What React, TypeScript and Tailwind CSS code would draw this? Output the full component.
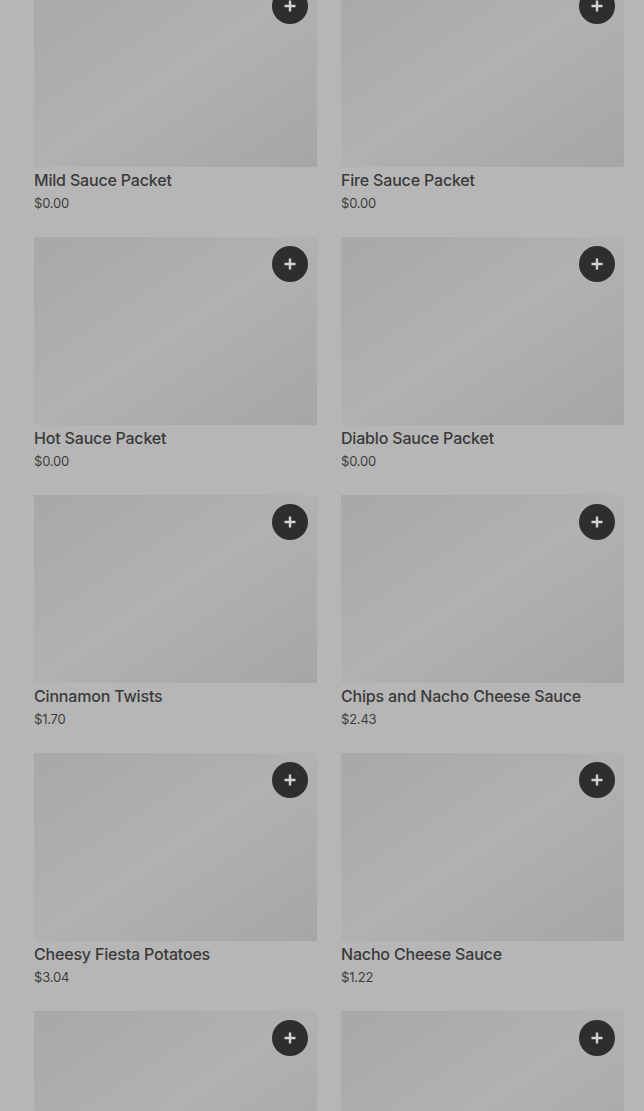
import React from 'react';

const items = [
  { name: 'Mild Sauce Packet', price: '$0.00' },
  { name: 'Fire Sauce Packet', price: '$0.00' },
  { name: 'Hot Sauce Packet', price: '$0.00' },
  { name: 'Diablo Sauce Packet', price: '$0.00' },
  { name: 'Cinnamon Twists', price: '$1.70' },
  { name: 'Chips and Nacho Cheese Sauce', price: '$2.43' },
  { name: 'Cheesy Fiesta Potatoes', price: '$3.04' },
  { name: 'Nacho Cheese Sauce', price: '$1.22' },
  { name: '', price: '' },
  { name: '', price: '' },
];

const PlusIcon = () => (
  <svg width="14" height="14" viewBox="0 0 14 14">
    <path d="M7 1.5v11M1.5 7h11" stroke="#d2d2d2" strokeWidth="2.4" />
  </svg>
);

const ItemCard = ({ name, price }: { name: string; price: string }) => (
  <div className="flex flex-col pb-6">
    <div className="relative h-[188px] bg-gradient-to-br from-[#a8a8a8] via-[#b1b1b1] to-[#a6a6a6]">
      <button className="absolute right-[9px] top-[9px] flex h-9 w-9 items-center justify-center rounded-full bg-[#2e2e2e]">
        <PlusIcon />
      </button>
    </div>
    {name && (
      <>
        <div className="mt-[1px] text-[16px] leading-6 font-medium tracking-[-0.18px] text-[#3a3a3a]">{name}</div>
        <div className="mt-[1px] text-[13px] leading-5 tracking-[-0.2px] text-[#3d3d3d]">{price}</div>
      </>
    )}
  </div>
);

export default function App() {
  return (
    <div
      className="h-[1111px] overflow-hidden bg-[#b6b6b6]"
      style={{ fontFamily: 'Inter, "Liberation Sans", sans-serif' }}
    >
      <div className="-mt-[21px] grid grid-cols-2 gap-x-6 pl-[34px] pr-5">
        {items.map((it, i) => (
          <ItemCard key={i} name={it.name} price={it.price} />
        ))}
      </div>
    </div>
  );
}
